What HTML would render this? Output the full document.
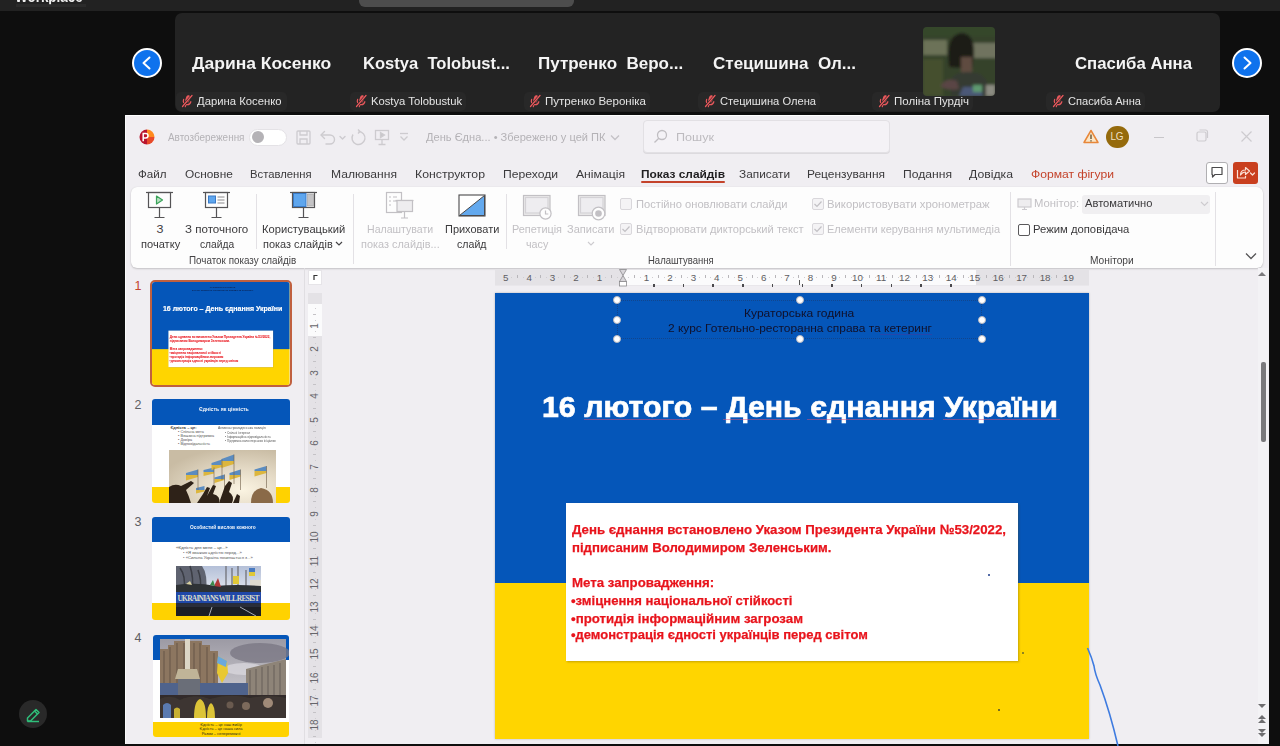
<!DOCTYPE html>
<html><head><meta charset="utf-8">
<style>
*{margin:0;padding:0;box-sizing:border-box}
html,body{width:1280px;height:746px;overflow:hidden;background:#0e0e0e;font-family:"Liberation Sans",sans-serif;position:relative}
.a{position:absolute}
.tx{position:absolute;white-space:nowrap;line-height:1;transform-origin:0 0;display:block}
svg{position:absolute;overflow:visible}
.navbtn{width:30px;height:30px;border-radius:50%;background:#0e72ed;border:2px solid #fff}
.plabel{top:92px;height:19px;background:#282828;border-radius:5px}
.hdl{width:8px;height:8px;border-radius:50%;background:#fff;border:1px solid #b8b8c0}
.sep{width:1px;background:#e3e1e5}
.cb{width:12px;height:12px;border:1px solid #d9d7db;background:#f4f3f5;border-radius:2px}
</style></head><body>
<!-- zoom top bar -->
<div class="a" style="left:0;top:0;width:1280px;height:11px;background:#222"></div>
<div class="a" style="left:359px;top:-8px;width:215px;height:15px;border-radius:6px;background:#4d4d4d"></div>
<!-- workplace text fragment -->
<div class="a" style="left:0;top:0;width:100px;height:11px;overflow:hidden"><div class="tx" style="left:15px;top:-10.6px;font-size:16px;font-weight:bold;color:#f0f0f0;transform:scaleX(0.84)">Workplace</div><div class="a" style="left:16px;top:3.5px;width:70px;height:3px;background:#2e2e2e;opacity:.8"></div></div>
<!-- participants strip -->
<div class="a" style="left:175px;top:13px;width:1045px;height:99px;background:#232323;border-radius:7px"></div>
<div class="a navbtn" style="left:132px;top:48px"></div>
<svg style="left:132px;top:48px" width="30" height="30"><path d="M17.5 9.5 L11.5 15 L17.5 20.5" fill="none" stroke="#fff" stroke-width="2" stroke-linecap="round" stroke-linejoin="round"/></svg>
<div class="a navbtn" style="left:1232px;top:48px"></div>
<svg style="left:1232px;top:48px" width="30" height="30"><path d="M12.5 9.5 L18.5 15 L12.5 20.5" fill="none" stroke="#fff" stroke-width="2" stroke-linecap="round" stroke-linejoin="round"/></svg>
<!-- labels -->
<div class="a plabel" style="left:176px;width:111px"></div>
<div class="a plabel" style="left:350px;width:116px"></div>
<div class="a plabel" style="left:524px;width:126px"></div>
<div class="a plabel" style="left:698px;width:122px"></div>
<div class="a plabel" style="left:872px;width:101px"></div>
<div class="a plabel" style="left:1046px;width:99px"></div>
<!-- mute icons -->
<svg style="left:180px;top:94px" width="14" height="14"><g transform="rotate(18 7 7)"><rect x="5" y="1" width="4.2" height="7.5" rx="2.1" fill="#e8585c"/><path d="M3.3 6.5 q0 4 3.8 4 q3.8 0 3.8 -4 M7.1 10.5 v2.5" fill="none" stroke="#e8585c" stroke-width="1.2" stroke-linecap="round"/></g><path d="M12 1.5 L2.5 12.5" stroke="#232323" stroke-width="2.6"/><path d="M12 1.5 L2.5 12.5" stroke="#e8585c" stroke-width="1.3" stroke-linecap="round"/></svg>
<svg style="left:354px;top:94px" width="14" height="14"><g transform="rotate(18 7 7)"><rect x="5" y="1" width="4.2" height="7.5" rx="2.1" fill="#e8585c"/><path d="M3.3 6.5 q0 4 3.8 4 q3.8 0 3.8 -4 M7.1 10.5 v2.5" fill="none" stroke="#e8585c" stroke-width="1.2" stroke-linecap="round"/></g><path d="M12 1.5 L2.5 12.5" stroke="#232323" stroke-width="2.6"/><path d="M12 1.5 L2.5 12.5" stroke="#e8585c" stroke-width="1.3" stroke-linecap="round"/></svg>
<svg style="left:528px;top:94px" width="14" height="14"><g transform="rotate(18 7 7)"><rect x="5" y="1" width="4.2" height="7.5" rx="2.1" fill="#e8585c"/><path d="M3.3 6.5 q0 4 3.8 4 q3.8 0 3.8 -4 M7.1 10.5 v2.5" fill="none" stroke="#e8585c" stroke-width="1.2" stroke-linecap="round"/></g><path d="M12 1.5 L2.5 12.5" stroke="#232323" stroke-width="2.6"/><path d="M12 1.5 L2.5 12.5" stroke="#e8585c" stroke-width="1.3" stroke-linecap="round"/></svg>
<svg style="left:703px;top:94px" width="14" height="14"><g transform="rotate(18 7 7)"><rect x="5" y="1" width="4.2" height="7.5" rx="2.1" fill="#e8585c"/><path d="M3.3 6.5 q0 4 3.8 4 q3.8 0 3.8 -4 M7.1 10.5 v2.5" fill="none" stroke="#e8585c" stroke-width="1.2" stroke-linecap="round"/></g><path d="M12 1.5 L2.5 12.5" stroke="#232323" stroke-width="2.6"/><path d="M12 1.5 L2.5 12.5" stroke="#e8585c" stroke-width="1.3" stroke-linecap="round"/></svg>
<svg style="left:877px;top:94px" width="14" height="14"><g transform="rotate(18 7 7)"><rect x="5" y="1" width="4.2" height="7.5" rx="2.1" fill="#e8585c"/><path d="M3.3 6.5 q0 4 3.8 4 q3.8 0 3.8 -4 M7.1 10.5 v2.5" fill="none" stroke="#e8585c" stroke-width="1.2" stroke-linecap="round"/></g><path d="M12 1.5 L2.5 12.5" stroke="#232323" stroke-width="2.6"/><path d="M12 1.5 L2.5 12.5" stroke="#e8585c" stroke-width="1.3" stroke-linecap="round"/></svg>
<svg style="left:1051px;top:94px" width="14" height="14"><g transform="rotate(18 7 7)"><rect x="5" y="1" width="4.2" height="7.5" rx="2.1" fill="#e8585c"/><path d="M3.3 6.5 q0 4 3.8 4 q3.8 0 3.8 -4 M7.1 10.5 v2.5" fill="none" stroke="#e8585c" stroke-width="1.2" stroke-linecap="round"/></g><path d="M12 1.5 L2.5 12.5" stroke="#232323" stroke-width="2.6"/><path d="M12 1.5 L2.5 12.5" stroke="#e8585c" stroke-width="1.3" stroke-linecap="round"/></svg>
<!-- video tile Поліна -->
<svg style="left:923px;top:27px" width="72" height="69" viewBox="0 0 72 69">
  <defs><filter id="bl" x="-10%" y="-10%" width="120%" height="120%"><feGaussianBlur stdDeviation="1.8"/></filter><clipPath id="vc"><rect width="72" height="69" rx="4"/></clipPath></defs>
  <g clip-path="url(#vc)"><g filter="url(#bl)">
  <rect x="-3" y="-3" width="78" height="75" fill="#36432a"/>
  <rect x="-3" y="-3" width="78" height="12" fill="#34462a"/>
  <rect x="0" y="13" width="24" height="15" fill="#6c7258"/>
  <rect x="46" y="16" width="28" height="15" fill="#70735e"/>
  <rect x="0" y="32" width="20" height="37" fill="#44502e"/>
  <path d="M26 40 Q22 8 38 6 Q52 6 51 28 L49 42z" fill="#1f1b17"/>
  <path d="M38 30 h11 v15 q-5 4 -11 0z" fill="#5e4c40"/>
  <path d="M28 69 V52 Q34 44 46 45 Q62 46 64 56 V69z" fill="#363a30"/>
  <path d="M18 58 Q24 50 34 54 L36 62 Q26 64 18 60z" fill="#5a4444"/>
  <path d="M36 69 L40 60 L58 60 L60 69z" fill="#4c5878"/>
  <rect x="50" y="58" width="9" height="7" fill="#5e9a70"/>
  <rect x="63" y="58" width="9" height="11" fill="#8c8c82"/>
  </g></g>
</svg>

<!-- PowerPoint window -->
<div class="a" style="left:125px;top:115px;width:1144px;height:629px;background:#f0eef2"></div>
<div class="a" style="left:125px;top:115px;width:1144px;height:1px;background:#fff"></div>
<div class="a" style="left:125px;top:115px;width:1px;height:629px;background:#fafafa"></div>
<!-- title bar: ppt logo -->
<svg style="left:138.5px;top:129px" width="16" height="16"><path d="M8 8 V0.5 A7.5 7.5 0 0 1 15.5 8 Z" fill="#ff8a1e"/><path d="M8 8 H15.5 A7.5 7.5 0 0 1 8 15.5 Z" fill="#e84a2a"/><path d="M8 0.5 A7.5 7.5 0 0 0 8 15.5 Z" fill="#b8142e"/><path d="M4.2 12.3 V4.6 h2.6 a2.2 2.2 0 0 1 0 4.4 h-2.6" fill="none" stroke="#fff" stroke-width="1.5"/></svg>
<!-- toggle -->
<div class="a" style="left:249px;top:128.5px;width:38px;height:17px;border-radius:9px;background:#fff;border:1px solid #e4e2e6"></div>
<div class="a" style="left:251.5px;top:131px;width:12px;height:12px;border-radius:50%;background:#b4b2b6"></div>
<!-- save/undo/redo/present/custom icons -->
<svg style="left:296px;top:130px" width="16" height="15"><g fill="none" stroke="#cdcbcf" stroke-width="1.3"><rect x="1" y="1" width="13" height="13" rx="1"/><path d="M4 1 v4 h7 v-4 M4 14 v-5 h7 v5"/></g></svg>
<svg style="left:319px;top:130px" width="27" height="15"><g fill="none" stroke="#cdcbcf" stroke-width="1.4" stroke-linecap="round" stroke-linejoin="round"><path d="M5.5 1.5 L2 5 L5.5 8.5"/><path d="M2.5 5 H11 a4.5 4.5 0 0 1 0 9 H7"/><path d="M21 6.5 l2.5 2.5 l2.5 -2.5"/></g></svg>
<svg style="left:350px;top:129px" width="17" height="17"><g fill="none" stroke="#cdcbcf" stroke-width="1.4"><path d="M8.5 2.5 a6.5 6.5 0 1 1 -5.5 3"/><path d="M8 0.5 l2 2 l-2 2"/></g></svg>
<svg style="left:374px;top:129px" width="16" height="17"><g fill="none" stroke="#cdcbcf" stroke-width="1.3"><rect x="1.5" y="1.5" width="13" height="9"/><path d="M8 10.5 v5 M4.5 15.5 h7"/><path d="M6.5 3.5 l4 2.5 l-4 2.5 z" fill="#c8c6ca"/></g></svg>
<svg style="left:399px;top:132px" width="10" height="10"><g fill="none" stroke="#cdcbcf" stroke-width="1.3"><path d="M1 1.5 h8"/><path d="M1.5 4.5 l3.5 3.5 l3.5 -3.5"/></g></svg>
<svg style="left:609.5px;top:133.5px" width="11" height="8"><path d="M1 1.5 l4 4 l4 -4" fill="none" stroke="#c4c2c6" stroke-width="1.3"/></svg>
<!-- search box -->
<div class="a" style="left:643px;top:120px;width:247px;height:33px;border-radius:4px;background:#f4f2f6;border:1px solid #e2e0e4;box-shadow:0 1px 0 #dcdade"></div>
<svg style="left:653px;top:129px" width="15" height="15"><g fill="none" stroke="#c0bec2" stroke-width="1.3"><circle cx="9" cy="6" r="4.5"/><path d="M5.8 9.2 L1.5 13.5"/></g></svg>
<!-- warning + avatar + window controls -->
<svg style="left:1083px;top:129px" width="16" height="15"><path d="M8 1.5 L15 13.5 H1 Z" fill="#fbe6c7" stroke="#e8873a" stroke-width="1.5" stroke-linejoin="round"/><path d="M8 5.5 v4.5 M8 11.2 v1.2" stroke="#5b4a2a" stroke-width="1.3"/></svg>
<div class="a" style="left:1106px;top:125.5px;width:22.5px;height:22.5px;border-radius:50%;background:#956a0c"></div>
<div class="tx" style="left:1110.5px;top:132px;font-size:10px;color:#eedfc0;letter-spacing:-0.2px">LG</div>
<div class="a" style="left:1154px;top:137px;width:10px;height:1px;background:#c8c6ca"></div>
<svg style="left:1196px;top:129px" width="13" height="13"><g fill="none" stroke="#cdcbcf" stroke-width="1.2"><rect x="1" y="3" width="9" height="9" rx="1.5"/><path d="M3.5 1 h6 a2 2 0 0 1 2 2 v6"/></g></svg>
<svg style="left:1240px;top:130px" width="13" height="13"><path d="M1.5 1.5 L11.5 11.5 M11.5 1.5 L1.5 11.5" stroke="#cdcbcf" stroke-width="1.2"/></svg>
<!-- active tab underline -->
<div class="a" style="left:641px;top:180.5px;width:84px;height:2px;background:#c4432b;border-radius:1px"></div>
<!-- comment + share -->
<div class="a" style="left:1205.5px;top:161.5px;width:22px;height:22px;border-radius:3px;background:#fff;border:1px solid #b0afb2"></div>
<svg style="left:1210px;top:166px" width="14" height="13"><path d="M2 1.5 h10 v7 h-7 l-2.5 2.5 v-2.5 h-0.5 z" fill="none" stroke="#4a494b" stroke-width="1.2" stroke-linejoin="round"/></svg>
<div class="a" style="left:1233px;top:161.5px;width:25px;height:22.5px;border-radius:3px;background:#c93f1e"></div>
<svg style="left:1235px;top:165px" width="22" height="16"><g fill="none" stroke="#fbe1d6" stroke-width="1.2" stroke-linejoin="round"><path d="M2.5 5 v8 h8 v-2"/><path d="M5.5 10 q0 -5 5 -5 v-2.5 l4 3.5 l-4 3.5 v-2.5 q-3 0 -5 3z"/><path d="M15.5 8 l2 2 l2 -2" stroke-linecap="round"/></g></svg>

<!-- ribbon panel -->
<div class="a" style="left:131px;top:186.5px;width:1132px;height:81px;background:#fdfdfd;border-radius:6px;box-shadow:0 1px 2px rgba(0,0,0,.18),0 0 1px rgba(0,0,0,.12)"></div>
<div class="a sep" style="left:255.5px;top:194px;height:55px"></div>
<div class="a sep" style="left:353px;top:194px;height:70px"></div>
<div class="a sep" style="left:505.5px;top:194px;height:55px"></div>
<div class="a sep" style="left:1009.5px;top:192px;height:74px"></div>
<div class="a sep" style="left:1215px;top:192px;height:74px"></div>
<!-- ribbon icons -->
<svg style="left:145px;top:191px" width="30" height="28"><g fill="none" stroke="#555456" stroke-width="1.2"><path d="M1 1.5 h27"/><rect x="3.5" y="1.5" width="22" height="15"/><path d="M14.5 16.5 v10 M9.5 26.5 h10"/></g><path d="M11.5 5 l6 4 l-6 4 z" fill="#b8e0c0" stroke="#3aa35a" stroke-width="1.2" stroke-linejoin="round"/></svg>
<svg style="left:202px;top:191px" width="30" height="28"><g fill="none" stroke="#555456" stroke-width="1.2"><path d="M1 1.5 h27"/><rect x="3.5" y="1.5" width="22" height="15"/><path d="M14.5 16.5 v10 M9.5 26.5 h10"/></g><rect x="6.5" y="5" width="7" height="7" fill="#5ea6ee" stroke="#3a7bc8" stroke-width="1"/><path d="M15.5 6 h7 M15.5 9 h7 M15.5 12 h7" stroke="#8b8a8c" stroke-width="1"/></svg>
<svg style="left:288.5px;top:191px" width="30" height="28"><g fill="none" stroke="#555456" stroke-width="1.2"><path d="M1 1.5 h27"/><rect x="3.5" y="1.5" width="22" height="15" fill="#fff"/><path d="M14.5 16.5 v10 M9.5 26.5 h10"/></g><rect x="4.5" y="2.5" width="12.5" height="13" fill="#5ea6ee" stroke="#3a7bc8" stroke-width="1"/><rect x="18.5" y="3" width="6" height="12" fill="#c4c3c5" stroke="#9a999b" stroke-width=".6"/></svg>
<svg style="left:385px;top:191px" width="30" height="29"><g fill="none" stroke="#c2c0c4" stroke-width="1.2"><rect x="1.5" y="1.5" width="15" height="20"/><path d="M4 6 h2 M8 6 h4 M4 10 h2 M8 10 h4 M4 14 h2"/><path d="M10.5 9.5 h18"/><rect x="12" y="9.5" width="15.5" height="11" fill="#eeedef"/><path d="M19.5 20.5 v6.5 M16 27 h7"/></g></svg>
<svg style="left:458px;top:194px" width="28" height="23"><rect x="1" y="1" width="26" height="21" fill="#fff" stroke="#4a494b" stroke-width="1.1"/><path d="M26.5 1.5 V21.5 H1.5 Z" fill="#63a9ee" stroke="#4a494b" stroke-width="1" stroke-linejoin="round"/></svg>
<svg style="left:522px;top:193px" width="32" height="30"><g fill="none" stroke="#c2c0c4" stroke-width="1.2"><rect x="1.5" y="2.5" width="26.5" height="20" fill="#ebeaec"/><rect x="3.5" y="4.5" width="22.5" height="15.5" stroke="#d4d2d6" fill="#eeedf0"/><circle cx="23.5" cy="20.5" r="5.6" fill="#fdfdfd"/><path d="M23.5 17.5 v3.5 h2.8"/></g></svg>
<svg style="left:577px;top:193px" width="32" height="30"><g fill="none" stroke="#c2c0c4" stroke-width="1.2"><rect x="1.5" y="2.5" width="26.5" height="20" fill="#ebeaec"/><rect x="3.5" y="4.5" width="22.5" height="15.5" stroke="#d4d2d6" fill="#eeedf0"/><circle cx="21.5" cy="20.5" r="6.3" fill="#fdfdfd"/></g><circle cx="21.5" cy="20.5" r="3.3" fill="#c2c0c4"/></svg>
<svg style="left:587px;top:241px" width="8" height="6"><path d="M1 1 l3 3 l3 -3" fill="none" stroke="#cdcbcf" stroke-width="1.1"/></svg>
<svg style="left:335px;top:241px" width="8" height="6"><path d="M1 1 l3 3 l3 -3" fill="none" stroke="#454446" stroke-width="1.2"/></svg>
<!-- checkboxes -->
<div class="a cb" style="left:619.5px;top:198px"></div>
<div class="a cb" style="left:619.5px;top:223px"></div>
<div class="a cb" style="left:811.5px;top:198px"></div>
<div class="a cb" style="left:811.5px;top:223px"></div>
<svg style="left:619.5px;top:223px" width="12" height="12"><path d="M2.5 6 l2.5 2.5 l4.5 -5" fill="none" stroke="#c2c0c4" stroke-width="1.2"/></svg>
<svg style="left:811.5px;top:198px" width="12" height="12"><path d="M2.5 6 l2.5 2.5 l4.5 -5" fill="none" stroke="#c2c0c4" stroke-width="1.2"/></svg>
<svg style="left:811.5px;top:223px" width="12" height="12"><path d="M2.5 6 l2.5 2.5 l4.5 -5" fill="none" stroke="#c2c0c4" stroke-width="1.2"/></svg>
<!-- monitors group -->
<svg style="left:1017px;top:198px" width="15" height="12"><g fill="none" stroke="#cdcbcf" stroke-width="1.2"><rect x="1" y="1" width="13" height="8" fill="#eeedef"/><path d="M7.5 9 v2 M5 11.5 h5"/></g></svg>
<div class="a" style="left:1082px;top:194.5px;width:128px;height:19px;border-radius:3px;background:#f0eff1"></div>
<svg style="left:1200px;top:201px" width="9" height="6"><path d="M1 1 l3.5 3.5 l3.5 -3.5" fill="none" stroke="#cdcbcf" stroke-width="1.1"/></svg>
<div class="a" style="left:1017.5px;top:223.5px;width:12px;height:12px;border:1px solid #5a595b;background:#fff;border-radius:2px"></div>
<svg style="left:1245px;top:252px" width="12" height="8"><path d="M1 1.5 l5 5 l5 -5" fill="none" stroke="#555456" stroke-width="1.3"/></svg>

<!-- thumbnail panel -->
<div class="a" style="left:304px;top:268px;width:1px;height:476px;background:#e0dee2"></div>
<!-- thumb 1 -->
<div class="a" style="left:150px;top:279.5px;width:141.5px;height:107px;border:2px solid #c0603f;border-radius:5px"></div>
<div class="a" style="left:152px;top:281.5px;width:137.5px;height:103px;border-radius:3px;overflow:hidden">
 <div class="a" style="left:0;top:0;width:594px;height:446px;transform:scale(0.2315);transform-origin:0 0">
<div class="a" style="left:0;top:0;width:594px;height:446px;background:#ffd500"></div><div class="a" style="left:0;top:0;width:594px;height:289.5px;background:#0556b9"></div><div class="a" style="left:71px;top:210px;width:452px;height:158px;background:#fff;box-shadow:1px 1px 2px rgba(90,70,0,.35)"></div><span class="tx" style="left:249.0px;top:14.65px;font-size:11px;color:#10102a;transform:scaleX(1.0943);">Кураторська година</span>
<span class="tx" style="left:172.9px;top:30.35px;font-size:11px;color:#10102a;transform:scaleX(1.0860);">2 курс Готельно-ресторанна справа та кетеринг</span>
<span class="tx" style="left:47.2px;top:98.80px;font-size:30px;color:#ffffff;font-weight:bold;transform:scaleX(1.0106);-webkit-text-stroke:0.7px #fff;">16 лютого – День єднання України</span>
<span class="tx" style="left:76.6px;top:230.34px;font-size:13.6px;color:#e8141c;font-weight:bold;transform:scaleX(0.9744);-webkit-text-stroke:0.25px #e8141c;">День єднання встановлено Указом Президента України №53/2022,</span>
<span class="tx" style="left:76.6px;top:247.54px;font-size:13.6px;color:#e8141c;font-weight:bold;transform:scaleX(0.9675);-webkit-text-stroke:0.25px #e8141c;">підписаним Володимиром Зеленським.</span>
<span class="tx" style="left:76.6px;top:283.24px;font-size:13.6px;color:#e8141c;font-weight:bold;transform:scaleX(0.9745);-webkit-text-stroke:0.25px #e8141c;">Мета запровадження:</span>
<span class="tx" style="left:75.5px;top:300.64px;font-size:13.6px;color:#e8141c;font-weight:bold;transform:scaleX(0.9653);-webkit-text-stroke:0.25px #e8141c;">•зміцнення національної стійкості</span>
<span class="tx" style="left:75.5px;top:318.54px;font-size:13.6px;color:#e8141c;font-weight:bold;transform:scaleX(0.9779);-webkit-text-stroke:0.25px #e8141c;">•протидія інформаційним загрозам</span>
<span class="tx" style="left:75.5px;top:335.44px;font-size:13.6px;color:#e8141c;font-weight:bold;transform:scaleX(0.9566);-webkit-text-stroke:0.25px #e8141c;">•демонстрація єдності українців перед світом</span>
 </div>
</div>
<!-- thumb 2 -->
<div class="a" style="left:152px;top:399px;width:137.5px;height:103.5px;background:#fff;border-radius:3px;overflow:hidden">
  <div class="a" style="left:0;top:0;width:137.5px;height:25.8px;background:#0556b9"></div>
  <div class="a" style="left:0;top:87.7px;width:137.5px;height:16px;background:#ffd200"></div>
  <svg style="left:17.2px;top:50.8px" width="107" height="53" viewBox="0 0 107 53">
    <defs><radialGradient id="sky2" cx="0.68" cy="0.75" r="0.8"><stop offset="0" stop-color="#fbf4e2"/><stop offset=".45" stop-color="#e6dcc8"/><stop offset="1" stop-color="#c9bca4"/></radialGradient>
    <linearGradient id="fl" x1="0" y1="0" x2="0" y2="1"><stop offset=".5" stop-color="#5b8cc0"/><stop offset=".5" stop-color="#dcb63e"/></linearGradient></defs>
    <rect width="107" height="53" fill="url(#sky2)"/>
    <g fill="url(#fl)">
      <path d="M17 23 L29 19.5 L29 27 L17 30.5z"/><path d="M34.5 20 L45 17.5 L45 23.5 L34.5 26z"/>
      <path d="M42.5 13 L53 9.5 L53 17 L42.5 20z"/><path d="M52.5 9 L65 4.5 L65 14 L52.5 18z"/>
      <path d="M45.5 27.5 L55.5 24.5 L55.5 30 L45.5 33z"/><path d="M60.5 23 L71.5 19.5 L71.5 26.5 L60.5 30z"/>
      <path d="M85.5 19.5 L97.5 16 L97.5 23 L85.5 26.5z"/><path d="M27 38 L35.5 36 L35.5 41.5 L27 43.5z"/>
    </g>
    <g stroke="#6e5e48" stroke-width=".6"><path d="M29 19.5 V40 M45 17.5 V36 M53 9.5 V30 M65 4.5 V34 M55.5 24.5 V42 M71.5 19.5 V40 M97.5 16 V38"/></g>
    <g fill="#2e2218">
      <path d="M0 53 V37 Q6 33 12 36 L22 31 L25 33 L17 40 Q20 46 22 53z"/>
      <path d="M28 53 L34 44 L38 37 L41 38 L38 46 L44 35 L47 36 L44 44 Q52 46 50 53z"/>
      <path d="M50 53 L56 36 L60 31 L63 33 L60 42 Q66 46 63 53z"/>
      <path d="M64 53 L68 44 L71 46 L70 53z"/>
    </g>
    <path d="M82 53 Q82 40 92 38 Q104 40 104 53z" fill="#8a6a48"/>
  </svg>
  <div class="tx" style="left:47px;top:7.6px;font-size:5.6px;font-weight:bold;color:#f0f4fa;transform:scaleX(0.93)">Єдність як цінність</div>
  <div class="tx" style="left:18.5px;top:26.5px;font-size:4px;font-weight:bold;color:#333">Єдність – це:</div>
  <div class="tx" style="left:26px;top:31px;font-size:3.8px;color:#555;line-height:4px">• Спільна мета<br>• Взаємна підтримка<br>• Довіра<br>• Відповідальність</div>
  <div class="tx" style="left:66px;top:28px;font-size:3.8px;color:#555;transform:scaleX(.88)">Активна громадянська позиція</div>
  <div class="tx" style="left:73px;top:32px;font-size:3.8px;color:#555;line-height:4px;transform:scaleX(.8)">• Спільні інтереси<br>• Інформаційна відповідальність<br>• Підтримка волонтерських ініціатив</div>
</div>
<!-- thumb 3 -->
<div class="a" style="left:152px;top:516.7px;width:137.5px;height:103px;background:#fff;border-radius:3px;overflow:hidden">
  <div class="a" style="left:0;top:0;width:137.5px;height:25.5px;background:#0556b9"></div>
  <div class="a" style="left:0;top:86.5px;width:137.5px;height:17px;background:#ffd200"></div>
  <div class="tx" style="left:37.5px;top:8.2px;font-size:5.6px;font-weight:bold;color:#f0f4fa;transform:scaleX(0.86)">Особистий вислов кожного</div>
  <div class="tx" style="left:24px;top:29px;font-size:4.2px;color:#444">«Єдність для мене – це...»</div>
  <div class="tx" style="left:31px;top:34.3px;font-size:4.2px;color:#555">• «Я вважаю єдністю перед...»</div>
  <div class="tx" style="left:31px;top:39.3px;font-size:4.2px;color:#555">• «Сильна Україна починається з...»</div>
  <svg style="left:24.3px;top:49.2px" width="85" height="50" viewBox="0 0 85 50">
    <defs><linearGradient id="sky3" x1="0" y1="0" x2="0" y2="1"><stop offset="0" stop-color="#b4c0d8"/><stop offset="1" stop-color="#e4e8f0"/></linearGradient><filter id="b3"><feGaussianBlur stdDeviation=".5"/></filter></defs>
    <rect width="85" height="50" fill="#22242a"/>
    <rect width="85" height="27" fill="url(#sky3)"/>
    <g filter="url(#b3)">
    <path d="M0 0 H26 Q32 8 30 26 H0z" fill="#5e6470"/>
    <path d="M4 2 Q10 10 8 24 M14 0 Q18 12 16 26 M22 4 Q26 14 24 26" stroke="#3a3c44" stroke-width="1.5" fill="none"/>
    <path d="M50 0 V26 M56 2 V26 M62 0 V26 M70 4 V26" stroke="#6a6a70" stroke-width="1.2"/>
    <path d="M57 10 h6 v8 h-6z" fill="#e0c838"/><path d="M73 2 h6 v4 h-6z" fill="#4a7ac0"/><path d="M73 6 h6 v4 h-6z" fill="#e0c838"/>
    <path d="M74 14 h11 v12 h-11z" fill="#e0dcd0"/>
    <path d="M0 19 Q20 16 40 20 Q60 18 85 20 V27 H0z" fill="#2e3036"/>
    <path d="M38 20 l4 -8 l3 9z" fill="#b03838"/><path d="M34 19 l3 -5 l2 6z" fill="#3a8a4a"/><path d="M10 18 l4 -3 l2 4z" fill="#d8d0a0"/>
    </g>
    <rect y="26" width="85" height="11.5" fill="#2048a8"/>
    <text x="42.5" y="34.5" text-anchor="middle" font-family="Liberation Serif" font-weight="bold" font-size="7.5" fill="#dcdcc8" textLength="82">UKRAINIANS WILL RESIST</text>
    <path d="M0 37.5 H85 V50 H0z" fill="#1c1e24"/>
    <path d="M0 37.5 H85 V41 H0z" fill="#2a2e3a"/>
    <path d="M33 50 L36 41 M64 41 L80 50" stroke="#a8acb4" stroke-width="1"/>
  </svg>
</div>
<!-- thumb 4 -->
<div class="a" style="left:152.7px;top:634.5px;width:136.7px;height:102.5px;background:#fff;border-radius:3px;overflow:hidden">
  <div class="a" style="left:0;top:0;width:136.7px;height:25px;background:#0556b9"></div>
  <div class="a" style="left:0;top:87px;width:136.7px;height:16px;background:#ffd200"></div>
  <svg style="left:7px;top:4.6px" width="126" height="79" viewBox="0 0 126 79">
    <defs><linearGradient id="sky4" x1="0" y1="0" x2="0" y2="1"><stop offset="0" stop-color="#9c9aa4"/><stop offset=".6" stop-color="#c4c2c8"/><stop offset="1" stop-color="#b0aeb6"/></linearGradient><filter id="b4"><feGaussianBlur stdDeviation=".6"/></filter></defs>
    <rect width="126" height="79" fill="url(#sky4)"/>
    <g filter="url(#b4)">
    <ellipse cx="100" cy="14" rx="30" ry="10" fill="#7a7884" opacity=".8"/>
    <ellipse cx="84" cy="30" rx="20" ry="6" fill="#d8d6dc" opacity=".8"/>
    <path d="M0 10 H8 V6 H14 V2 H42 V6 H50 V12 H58 V46 H0z" fill="#8c7660"/>
    <path d="M4 12 V44 M10 8 V44 M17 4 V44 M24 4 V44 M34 4 V44 M40 4 V44 M47 8 V44 M54 14 V44" stroke="#6a5848" stroke-width="1.1"/>
    <rect x="25" y="0" width="5" height="34" fill="#dcd6c6"/>
    <path d="M18 30 h19 l3 10 h-25z" fill="#c0b498"/>
    <path d="M86 30 L126 20 V60 H86z" fill="#8e8478"/>
    <path d="M90 31 V58 M96 30 V58 M102 28 V58 M108 27 V58 M114 26 V58 M120 24 V58" stroke="#665e56" stroke-width="1"/>
    <rect x="0" y="44" width="88" height="14" fill="#50648c"/>
    <path d="M18 40 h22 v16 h-22z" fill="#6a6e78"/>
    <path d="M58 17 L67 22 L68 34 L62 44 L57 34z" fill="#e8c830"/>
    <path d="M58 17 L67 22 L66 28 L57 24z" fill="#6aa8dc"/>
    <rect x="0" y="56" width="126" height="23" fill="#302c2a"/>
    <path d="M0 60 Q10 55 20 61 Q35 54 50 60 Q70 54 90 59 Q110 55 126 59 V79 H0z" fill="#3e3630"/>
    <path d="M34 79 Q34 62 40 60 Q46 62 46 79z M47 79 Q47 66 51 64 Q55 66 55 79z" fill="#dcc438"/>
    <path d="M3 79 V66 Q7 62 11 66 V79z" fill="#5a7ab0"/><path d="M14 79 V70 Q17 67 20 70 V79z" fill="#c8b030"/>
    <circle cx="108" cy="64" r="5" fill="#a08a78"/><circle cx="86" cy="67" r="4" fill="#7c6a5c"/><circle cx="70" cy="66" r="3.5" fill="#6a5a50"/>
    </g>
  </svg>
  <div class="tx" style="left:0;top:88.5px;width:136.7px;text-align:center;font-size:3.9px;color:#2a2a1a;line-height:4.3px">Єдність – це наш вибір<br>Єдність – це наша сила<br>Разом – непереможні</div>
</div>

<!-- vertical ruler -->
<div class="a" style="left:308px;top:270px;width:14px;height:14.5px;background:#fff;border:1px solid #e6e4e8"></div>
<svg style="left:308px;top:270px" width="14" height="15"><path d="M6 10 v-4.5 h3.5" fill="none" stroke="#333" stroke-width="1.2"/></svg>
<div class="a" style="left:308px;top:293px;width:14px;height:445px;background:#e4e2e6"></div>
<div class="a" style="left:308px;top:304px;width:14px;height:32px;background:#fbfbfc"></div>
<!-- horizontal ruler -->
<div class="a" style="left:495px;top:270px;width:594px;height:14.5px;background:#e4e2e6"></div><div class="a" style="left:495px;top:284.5px;width:594px;height:1.5px;background:#e9e7eb"></div>
<div class="a" style="left:623px;top:270px;width:353px;height:14.5px;background:#fbfbfc"></div>
<div class="tx" style="left:490.8px;top:272.7px;width:30px;text-align:center;font-size:9.8px;color:#5e5d62">5</div>
<div class="a" style="left:511.1px;top:276.5px;width:1px;height:1px;background:#cfcdd1"></div>
<div class="a" style="left:517.0px;top:275px;width:1px;height:3px;background:#b8b6ba"></div>
<div class="a" style="left:522.8px;top:276.5px;width:1px;height:1px;background:#cfcdd1"></div>
<div class="tx" style="left:514.2px;top:272.7px;width:30px;text-align:center;font-size:9.8px;color:#5e5d62">4</div>
<div class="a" style="left:534.6px;top:276.5px;width:1px;height:1px;background:#cfcdd1"></div>
<div class="a" style="left:540.4px;top:275px;width:1px;height:3px;background:#b8b6ba"></div>
<div class="a" style="left:546.3px;top:276.5px;width:1px;height:1px;background:#cfcdd1"></div>
<div class="tx" style="left:537.6px;top:272.7px;width:30px;text-align:center;font-size:9.8px;color:#5e5d62">3</div>
<div class="a" style="left:558.0px;top:276.5px;width:1px;height:1px;background:#cfcdd1"></div>
<div class="a" style="left:563.9px;top:275px;width:1px;height:3px;background:#b8b6ba"></div>
<div class="a" style="left:569.7px;top:276.5px;width:1px;height:1px;background:#cfcdd1"></div>
<div class="tx" style="left:561.1px;top:272.7px;width:30px;text-align:center;font-size:9.8px;color:#5e5d62">2</div>
<div class="a" style="left:581.5px;top:276.5px;width:1px;height:1px;background:#cfcdd1"></div>
<div class="a" style="left:587.3px;top:275px;width:1px;height:3px;background:#b8b6ba"></div>
<div class="a" style="left:593.2px;top:276.5px;width:1px;height:1px;background:#cfcdd1"></div>
<div class="tx" style="left:584.5px;top:272.7px;width:30px;text-align:center;font-size:9.8px;color:#5e5d62">1</div>
<div class="a" style="left:604.9px;top:276.5px;width:1px;height:1px;background:#cfcdd1"></div>
<div class="a" style="left:610.8px;top:275px;width:1px;height:3px;background:#b8b6ba"></div>
<div class="a" style="left:616.6px;top:276.5px;width:1px;height:1px;background:#cfcdd1"></div>
<div class="a" style="left:628.4px;top:276.5px;width:1px;height:1px;background:#cfcdd1"></div>
<div class="a" style="left:634.2px;top:275px;width:1px;height:3px;background:#b8b6ba"></div>
<div class="a" style="left:640.1px;top:276.5px;width:1px;height:1px;background:#cfcdd1"></div>
<div class="tx" style="left:631.5px;top:272.7px;width:30px;text-align:center;font-size:9.8px;color:#5e5d62">1</div>
<div class="a" style="left:651.8px;top:276.5px;width:1px;height:1px;background:#cfcdd1"></div>
<div class="a" style="left:657.7px;top:275px;width:1px;height:3px;background:#b8b6ba"></div>
<div class="a" style="left:663.5px;top:276.5px;width:1px;height:1px;background:#cfcdd1"></div>
<div class="tx" style="left:654.9px;top:272.7px;width:30px;text-align:center;font-size:9.8px;color:#5e5d62">2</div>
<div class="a" style="left:675.3px;top:276.5px;width:1px;height:1px;background:#cfcdd1"></div>
<div class="a" style="left:681.1px;top:275px;width:1px;height:3px;background:#b8b6ba"></div>
<div class="a" style="left:687.0px;top:276.5px;width:1px;height:1px;background:#cfcdd1"></div>
<div class="tx" style="left:678.4px;top:272.7px;width:30px;text-align:center;font-size:9.8px;color:#5e5d62">3</div>
<div class="a" style="left:698.7px;top:276.5px;width:1px;height:1px;background:#cfcdd1"></div>
<div class="a" style="left:704.6px;top:275px;width:1px;height:3px;background:#b8b6ba"></div>
<div class="a" style="left:710.4px;top:276.5px;width:1px;height:1px;background:#cfcdd1"></div>
<div class="tx" style="left:701.8px;top:272.7px;width:30px;text-align:center;font-size:9.8px;color:#5e5d62">4</div>
<div class="a" style="left:722.2px;top:276.5px;width:1px;height:1px;background:#cfcdd1"></div>
<div class="a" style="left:728.0px;top:275px;width:1px;height:3px;background:#b8b6ba"></div>
<div class="a" style="left:733.9px;top:276.5px;width:1px;height:1px;background:#cfcdd1"></div>
<div class="tx" style="left:725.2px;top:272.7px;width:30px;text-align:center;font-size:9.8px;color:#5e5d62">5</div>
<div class="a" style="left:745.6px;top:276.5px;width:1px;height:1px;background:#cfcdd1"></div>
<div class="a" style="left:751.5px;top:275px;width:1px;height:3px;background:#b8b6ba"></div>
<div class="a" style="left:757.3px;top:276.5px;width:1px;height:1px;background:#cfcdd1"></div>
<div class="tx" style="left:748.7px;top:272.7px;width:30px;text-align:center;font-size:9.8px;color:#5e5d62">6</div>
<div class="a" style="left:769.1px;top:276.5px;width:1px;height:1px;background:#cfcdd1"></div>
<div class="a" style="left:774.9px;top:275px;width:1px;height:3px;background:#b8b6ba"></div>
<div class="a" style="left:780.8px;top:276.5px;width:1px;height:1px;background:#cfcdd1"></div>
<div class="tx" style="left:772.1px;top:272.7px;width:30px;text-align:center;font-size:9.8px;color:#5e5d62">7</div>
<div class="a" style="left:792.5px;top:276.5px;width:1px;height:1px;background:#cfcdd1"></div>
<div class="a" style="left:798.4px;top:275px;width:1px;height:3px;background:#b8b6ba"></div>
<div class="a" style="left:804.2px;top:276.5px;width:1px;height:1px;background:#cfcdd1"></div>
<div class="tx" style="left:795.6px;top:272.7px;width:30px;text-align:center;font-size:9.8px;color:#5e5d62">8</div>
<div class="a" style="left:816.0px;top:276.5px;width:1px;height:1px;background:#cfcdd1"></div>
<div class="a" style="left:821.8px;top:275px;width:1px;height:3px;background:#b8b6ba"></div>
<div class="a" style="left:827.7px;top:276.5px;width:1px;height:1px;background:#cfcdd1"></div>
<div class="tx" style="left:819.0px;top:272.7px;width:30px;text-align:center;font-size:9.8px;color:#5e5d62">9</div>
<div class="a" style="left:839.4px;top:276.5px;width:1px;height:1px;background:#cfcdd1"></div>
<div class="a" style="left:845.3px;top:275px;width:1px;height:3px;background:#b8b6ba"></div>
<div class="a" style="left:851.1px;top:276.5px;width:1px;height:1px;background:#cfcdd1"></div>
<div class="tx" style="left:842.5px;top:272.7px;width:30px;text-align:center;font-size:9.8px;color:#5e5d62">10</div>
<div class="a" style="left:862.9px;top:276.5px;width:1px;height:1px;background:#cfcdd1"></div>
<div class="a" style="left:868.7px;top:275px;width:1px;height:3px;background:#b8b6ba"></div>
<div class="a" style="left:874.6px;top:276.5px;width:1px;height:1px;background:#cfcdd1"></div>
<div class="tx" style="left:866.0px;top:272.7px;width:30px;text-align:center;font-size:9.8px;color:#5e5d62">11</div>
<div class="a" style="left:886.3px;top:276.5px;width:1px;height:1px;background:#cfcdd1"></div>
<div class="a" style="left:892.2px;top:275px;width:1px;height:3px;background:#b8b6ba"></div>
<div class="a" style="left:898.0px;top:276.5px;width:1px;height:1px;background:#cfcdd1"></div>
<div class="tx" style="left:889.4px;top:272.7px;width:30px;text-align:center;font-size:9.8px;color:#5e5d62">12</div>
<div class="a" style="left:909.8px;top:276.5px;width:1px;height:1px;background:#cfcdd1"></div>
<div class="a" style="left:915.6px;top:275px;width:1px;height:3px;background:#b8b6ba"></div>
<div class="a" style="left:921.5px;top:276.5px;width:1px;height:1px;background:#cfcdd1"></div>
<div class="tx" style="left:912.8px;top:272.7px;width:30px;text-align:center;font-size:9.8px;color:#5e5d62">13</div>
<div class="a" style="left:933.2px;top:276.5px;width:1px;height:1px;background:#cfcdd1"></div>
<div class="a" style="left:939.1px;top:275px;width:1px;height:3px;background:#b8b6ba"></div>
<div class="a" style="left:944.9px;top:276.5px;width:1px;height:1px;background:#cfcdd1"></div>
<div class="tx" style="left:936.3px;top:272.7px;width:30px;text-align:center;font-size:9.8px;color:#5e5d62">14</div>
<div class="a" style="left:956.7px;top:276.5px;width:1px;height:1px;background:#cfcdd1"></div>
<div class="a" style="left:962.5px;top:275px;width:1px;height:3px;background:#b8b6ba"></div>
<div class="a" style="left:968.4px;top:276.5px;width:1px;height:1px;background:#cfcdd1"></div>
<div class="tx" style="left:959.8px;top:272.7px;width:30px;text-align:center;font-size:9.8px;color:#5e5d62">15</div>
<div class="a" style="left:980.1px;top:276.5px;width:1px;height:1px;background:#cfcdd1"></div>
<div class="a" style="left:986.0px;top:275px;width:1px;height:3px;background:#b8b6ba"></div>
<div class="a" style="left:991.8px;top:276.5px;width:1px;height:1px;background:#cfcdd1"></div>
<div class="tx" style="left:983.2px;top:272.7px;width:30px;text-align:center;font-size:9.8px;color:#5e5d62">16</div>
<div class="a" style="left:1003.6px;top:276.5px;width:1px;height:1px;background:#cfcdd1"></div>
<div class="a" style="left:1009.4px;top:275px;width:1px;height:3px;background:#b8b6ba"></div>
<div class="a" style="left:1015.3px;top:276.5px;width:1px;height:1px;background:#cfcdd1"></div>
<div class="tx" style="left:1006.6px;top:272.7px;width:30px;text-align:center;font-size:9.8px;color:#5e5d62">17</div>
<div class="a" style="left:1027.0px;top:276.5px;width:1px;height:1px;background:#cfcdd1"></div>
<div class="a" style="left:1032.9px;top:275px;width:1px;height:3px;background:#b8b6ba"></div>
<div class="a" style="left:1038.7px;top:276.5px;width:1px;height:1px;background:#cfcdd1"></div>
<div class="tx" style="left:1030.1px;top:272.7px;width:30px;text-align:center;font-size:9.8px;color:#5e5d62">18</div>
<div class="a" style="left:1050.5px;top:276.5px;width:1px;height:1px;background:#cfcdd1"></div>
<div class="a" style="left:1056.3px;top:275px;width:1px;height:3px;background:#b8b6ba"></div>
<div class="a" style="left:1062.2px;top:276.5px;width:1px;height:1px;background:#cfcdd1"></div>
<div class="tx" style="left:1053.5px;top:272.7px;width:30px;text-align:center;font-size:9.8px;color:#5e5d62">19</div>
<div class="tx" style="left:300.0px;top:320.9px;width:30px;text-align:center;font-size:10px;color:#66656a;transform:rotate(-90deg);transform-origin:15px 5px">1</div>
<div class="tx" style="left:300.0px;top:344.4px;width:30px;text-align:center;font-size:10px;color:#66656a;transform:rotate(-90deg);transform-origin:15px 5px">2</div>
<div class="tx" style="left:300.0px;top:367.9px;width:30px;text-align:center;font-size:10px;color:#66656a;transform:rotate(-90deg);transform-origin:15px 5px">3</div>
<div class="tx" style="left:300.0px;top:391.3px;width:30px;text-align:center;font-size:10px;color:#66656a;transform:rotate(-90deg);transform-origin:15px 5px">4</div>
<div class="tx" style="left:300.0px;top:414.8px;width:30px;text-align:center;font-size:10px;color:#66656a;transform:rotate(-90deg);transform-origin:15px 5px">5</div>
<div class="tx" style="left:300.0px;top:438.2px;width:30px;text-align:center;font-size:10px;color:#66656a;transform:rotate(-90deg);transform-origin:15px 5px">6</div>
<div class="tx" style="left:300.0px;top:461.6px;width:30px;text-align:center;font-size:10px;color:#66656a;transform:rotate(-90deg);transform-origin:15px 5px">7</div>
<div class="tx" style="left:300.0px;top:485.1px;width:30px;text-align:center;font-size:10px;color:#66656a;transform:rotate(-90deg);transform-origin:15px 5px">8</div>
<div class="tx" style="left:300.0px;top:508.5px;width:30px;text-align:center;font-size:10px;color:#66656a;transform:rotate(-90deg);transform-origin:15px 5px">9</div>
<div class="tx" style="left:300.0px;top:532.0px;width:30px;text-align:center;font-size:10px;color:#66656a;transform:rotate(-90deg);transform-origin:15px 5px">10</div>
<div class="tx" style="left:300.0px;top:555.5px;width:30px;text-align:center;font-size:10px;color:#66656a;transform:rotate(-90deg);transform-origin:15px 5px">11</div>
<div class="tx" style="left:300.0px;top:578.9px;width:30px;text-align:center;font-size:10px;color:#66656a;transform:rotate(-90deg);transform-origin:15px 5px">12</div>
<div class="tx" style="left:300.0px;top:602.3px;width:30px;text-align:center;font-size:10px;color:#66656a;transform:rotate(-90deg);transform-origin:15px 5px">13</div>
<div class="tx" style="left:300.0px;top:625.8px;width:30px;text-align:center;font-size:10px;color:#66656a;transform:rotate(-90deg);transform-origin:15px 5px">14</div>
<div class="tx" style="left:300.0px;top:649.2px;width:30px;text-align:center;font-size:10px;color:#66656a;transform:rotate(-90deg);transform-origin:15px 5px">15</div>
<div class="tx" style="left:300.0px;top:672.7px;width:30px;text-align:center;font-size:10px;color:#66656a;transform:rotate(-90deg);transform-origin:15px 5px">16</div>
<div class="tx" style="left:300.0px;top:696.1px;width:30px;text-align:center;font-size:10px;color:#66656a;transform:rotate(-90deg);transform-origin:15px 5px">17</div>
<div class="tx" style="left:300.0px;top:719.6px;width:30px;text-align:center;font-size:10px;color:#66656a;transform:rotate(-90deg);transform-origin:15px 5px">18</div>
<div class="a" style="left:314.5px;top:307.9px;width:1px;height:1px;background:#cfcdd1"></div>
<div class="a" style="left:313px;top:313.7px;width:3px;height:1px;background:#c4c2c6"></div>
<div class="a" style="left:314.5px;top:319.6px;width:1px;height:1px;background:#cfcdd1"></div>
<div class="a" style="left:314.5px;top:331.3px;width:1px;height:1px;background:#cfcdd1"></div>
<div class="a" style="left:313px;top:337.2px;width:3px;height:1px;background:#c4c2c6"></div>
<div class="a" style="left:314.5px;top:343.0px;width:1px;height:1px;background:#cfcdd1"></div>
<div class="a" style="left:314.5px;top:354.8px;width:1px;height:1px;background:#cfcdd1"></div>
<div class="a" style="left:313px;top:360.6px;width:3px;height:1px;background:#c4c2c6"></div>
<div class="a" style="left:314.5px;top:366.5px;width:1px;height:1px;background:#cfcdd1"></div>
<div class="a" style="left:314.5px;top:378.2px;width:1px;height:1px;background:#cfcdd1"></div>
<div class="a" style="left:313px;top:384.1px;width:3px;height:1px;background:#c4c2c6"></div>
<div class="a" style="left:314.5px;top:389.9px;width:1px;height:1px;background:#cfcdd1"></div>
<div class="a" style="left:314.5px;top:401.7px;width:1px;height:1px;background:#cfcdd1"></div>
<div class="a" style="left:313px;top:407.5px;width:3px;height:1px;background:#c4c2c6"></div>
<div class="a" style="left:314.5px;top:413.4px;width:1px;height:1px;background:#cfcdd1"></div>
<div class="a" style="left:314.5px;top:425.1px;width:1px;height:1px;background:#cfcdd1"></div>
<div class="a" style="left:313px;top:431.0px;width:3px;height:1px;background:#c4c2c6"></div>
<div class="a" style="left:314.5px;top:436.8px;width:1px;height:1px;background:#cfcdd1"></div>
<div class="a" style="left:314.5px;top:448.6px;width:1px;height:1px;background:#cfcdd1"></div>
<div class="a" style="left:313px;top:454.4px;width:3px;height:1px;background:#c4c2c6"></div>
<div class="a" style="left:314.5px;top:460.3px;width:1px;height:1px;background:#cfcdd1"></div>
<div class="a" style="left:314.5px;top:472.0px;width:1px;height:1px;background:#cfcdd1"></div>
<div class="a" style="left:313px;top:477.9px;width:3px;height:1px;background:#c4c2c6"></div>
<div class="a" style="left:314.5px;top:483.7px;width:1px;height:1px;background:#cfcdd1"></div>
<div class="a" style="left:314.5px;top:495.5px;width:1px;height:1px;background:#cfcdd1"></div>
<div class="a" style="left:313px;top:501.3px;width:3px;height:1px;background:#c4c2c6"></div>
<div class="a" style="left:314.5px;top:507.2px;width:1px;height:1px;background:#cfcdd1"></div>
<div class="a" style="left:314.5px;top:518.9px;width:1px;height:1px;background:#cfcdd1"></div>
<div class="a" style="left:313px;top:524.8px;width:3px;height:1px;background:#c4c2c6"></div>
<div class="a" style="left:314.5px;top:530.6px;width:1px;height:1px;background:#cfcdd1"></div>
<div class="a" style="left:314.5px;top:542.4px;width:1px;height:1px;background:#cfcdd1"></div>
<div class="a" style="left:313px;top:548.2px;width:3px;height:1px;background:#c4c2c6"></div>
<div class="a" style="left:314.5px;top:554.1px;width:1px;height:1px;background:#cfcdd1"></div>
<div class="a" style="left:314.5px;top:565.8px;width:1px;height:1px;background:#cfcdd1"></div>
<div class="a" style="left:313px;top:571.7px;width:3px;height:1px;background:#c4c2c6"></div>
<div class="a" style="left:314.5px;top:577.5px;width:1px;height:1px;background:#cfcdd1"></div>
<div class="a" style="left:314.5px;top:589.3px;width:1px;height:1px;background:#cfcdd1"></div>
<div class="a" style="left:313px;top:595.1px;width:3px;height:1px;background:#c4c2c6"></div>
<div class="a" style="left:314.5px;top:601.0px;width:1px;height:1px;background:#cfcdd1"></div>
<div class="a" style="left:314.5px;top:612.7px;width:1px;height:1px;background:#cfcdd1"></div>
<div class="a" style="left:313px;top:618.6px;width:3px;height:1px;background:#c4c2c6"></div>
<div class="a" style="left:314.5px;top:624.4px;width:1px;height:1px;background:#cfcdd1"></div>
<div class="a" style="left:314.5px;top:636.2px;width:1px;height:1px;background:#cfcdd1"></div>
<div class="a" style="left:313px;top:642.0px;width:3px;height:1px;background:#c4c2c6"></div>
<div class="a" style="left:314.5px;top:647.9px;width:1px;height:1px;background:#cfcdd1"></div>
<div class="a" style="left:314.5px;top:659.6px;width:1px;height:1px;background:#cfcdd1"></div>
<div class="a" style="left:313px;top:665.5px;width:3px;height:1px;background:#c4c2c6"></div>
<div class="a" style="left:314.5px;top:671.3px;width:1px;height:1px;background:#cfcdd1"></div>
<div class="a" style="left:314.5px;top:683.1px;width:1px;height:1px;background:#cfcdd1"></div>
<div class="a" style="left:313px;top:688.9px;width:3px;height:1px;background:#c4c2c6"></div>
<div class="a" style="left:314.5px;top:694.8px;width:1px;height:1px;background:#cfcdd1"></div>
<div class="a" style="left:314.5px;top:706.5px;width:1px;height:1px;background:#cfcdd1"></div>
<div class="a" style="left:313px;top:712.4px;width:3px;height:1px;background:#c4c2c6"></div>
<div class="a" style="left:314.5px;top:718.2px;width:1px;height:1px;background:#cfcdd1"></div>
<div class="a" style="left:314.5px;top:730.0px;width:1px;height:1px;background:#cfcdd1"></div>
<div class="a" style="left:313px;top:735.8px;width:3px;height:1px;background:#c4c2c6"></div>
<div class="a" style="left:314.5px;top:741.7px;width:1px;height:1px;background:#cfcdd1"></div>
<svg style="left:619px;top:269px" width="9" height="19"><path d="M0.5 0.5 h7 l-3.5 6 z" fill="#d8d6da" stroke="#8a898c" stroke-width="0.8"/><path d="M0.5 12.5 l3.5 -6 l3.5 6 z" fill="#d8d6da" stroke="#8a898c" stroke-width="0.8"/><rect x="0.5" y="12.5" width="7" height="4.5" fill="#fff" stroke="#8a898c" stroke-width="0.8"/></svg>
<div class="a" style="left:653.0px;top:284px;width:1.5px;height:3px;background:#4a494c"></div>
<div class="a" style="left:682.7px;top:284px;width:1.5px;height:3px;background:#4a494c"></div>
<div class="a" style="left:712.4px;top:284px;width:1.5px;height:3px;background:#4a494c"></div>
<div class="a" style="left:742.1px;top:284px;width:1.5px;height:3px;background:#4a494c"></div>
<div class="a" style="left:771.8px;top:284px;width:1.5px;height:3px;background:#4a494c"></div>
<div class="a" style="left:801.5px;top:284px;width:1.5px;height:3px;background:#4a494c"></div>
<div class="a" style="left:831.2px;top:284px;width:1.5px;height:3px;background:#4a494c"></div>
<div class="a" style="left:860.9px;top:284px;width:1.5px;height:3px;background:#4a494c"></div>
<div class="a" style="left:890.6px;top:284px;width:1.5px;height:3px;background:#4a494c"></div>
<div class="a" style="left:920.3px;top:284px;width:1.5px;height:3px;background:#4a494c"></div>
<div class="a" style="left:950.0px;top:284px;width:1.5px;height:3px;background:#4a494c"></div>
<div class="a" style="left:799px;top:280px;width:1px;height:5px;background:#555"></div>

<!-- slide -->
<div class="a" style="left:495px;top:293px;width:594px;height:446px;box-shadow:0 0 2px rgba(0,0,0,.25)"></div>
<div class="a" id="mainslide" style="left:495px;top:293px;width:594px;height:446px;overflow:hidden">
<div class="a" style="left:0;top:0;width:594px;height:446px;background:#ffd500"></div><div class="a" style="left:0;top:0;width:594px;height:289.5px;background:#0556b9"></div><div class="a" style="left:71px;top:210px;width:452px;height:158px;background:#fff;box-shadow:1px 1px 2px rgba(90,70,0,.35)"></div><span class="tx" style="left:249.0px;top:14.65px;font-size:11px;color:#10102a;transform:scaleX(1.0943);">Кураторська година</span>
<span class="tx" style="left:172.9px;top:30.35px;font-size:11px;color:#10102a;transform:scaleX(1.0860);">2 курс Готельно-ресторанна справа та кетеринг</span>
<span class="tx" style="left:47.2px;top:98.80px;font-size:30px;color:#ffffff;font-weight:bold;transform:scaleX(1.0106);-webkit-text-stroke:0.7px #fff;">16 лютого – День єднання України</span>
<span class="tx" style="left:76.6px;top:230.34px;font-size:13.6px;color:#e8141c;font-weight:bold;transform:scaleX(0.9744);-webkit-text-stroke:0.25px #e8141c;">День єднання встановлено Указом Президента України №53/2022,</span>
<span class="tx" style="left:76.6px;top:247.54px;font-size:13.6px;color:#e8141c;font-weight:bold;transform:scaleX(0.9675);-webkit-text-stroke:0.25px #e8141c;">підписаним Володимиром Зеленським.</span>
<span class="tx" style="left:76.6px;top:283.24px;font-size:13.6px;color:#e8141c;font-weight:bold;transform:scaleX(0.9745);-webkit-text-stroke:0.25px #e8141c;">Мета запровадження:</span>
<span class="tx" style="left:75.5px;top:300.64px;font-size:13.6px;color:#e8141c;font-weight:bold;transform:scaleX(0.9653);-webkit-text-stroke:0.25px #e8141c;">•зміцнення національної стійкості</span>
<span class="tx" style="left:75.5px;top:318.54px;font-size:13.6px;color:#e8141c;font-weight:bold;transform:scaleX(0.9779);-webkit-text-stroke:0.25px #e8141c;">•протидія інформаційним загрозам</span>
<span class="tx" style="left:75.5px;top:335.44px;font-size:13.6px;color:#e8141c;font-weight:bold;transform:scaleX(0.9566);-webkit-text-stroke:0.25px #e8141c;">•демонстрація єдності українців перед світом</span>
<!-- selection box -->
<div class="a" style="left:122px;top:7px;width:365px;height:38.5px;border:1px dotted rgba(40,40,60,.35)"></div>
<div class="a hdl" style="left:118px;top:3px"></div>
<div class="a hdl" style="left:300.5px;top:3px"></div>
<div class="a hdl" style="left:482.5px;top:3px"></div>
<div class="a hdl" style="left:118px;top:22.5px"></div>
<div class="a hdl" style="left:482.5px;top:22.5px"></div>
<div class="a hdl" style="left:118px;top:41.5px"></div>
<div class="a hdl" style="left:300.5px;top:41.5px"></div>
<div class="a hdl" style="left:482.5px;top:41.5px"></div>
<!-- spelling squiggles on title -->
<div class="a" style="left:89px;top:125.5px;width:106px;height:1px;background:rgba(220,80,120,.5)"></div>
<div class="a" style="left:228px;top:125.5px;width:77px;height:1px;background:rgba(220,80,120,.5)"></div>
<div class="a" style="left:312px;top:125.5px;width:126px;height:1px;background:rgba(220,80,120,.5)"></div>
<div class="a" style="left:448px;top:125.5px;width:117px;height:1px;background:rgba(220,80,120,.5)"></div>
<div class="a" style="left:385px;top:40.5px;width:52px;height:1px;background:rgba(60,60,160,.6)"></div>
<div class="a" style="left:493px;top:281px;width:2px;height:2px;background:#1a3a8a;border-radius:1px"></div>
<div class="a" style="left:527px;top:359px;width:2px;height:2px;background:#6a6a2a;border-radius:1px"></div>
<div class="a" style="left:503px;top:416px;width:2px;height:2px;background:#4a4a2a;border-radius:1px"></div>
</div>

<!-- scrollbar right -->
<div class="a" style="left:1258px;top:268px;width:10px;height:476px;background:#f3f2f5"></div>
<div class="a" style="left:1261px;top:362px;width:4.5px;height:80px;border-radius:2px;background:#7a797c"></div>
<svg style="left:1256px;top:270px" width="12" height="8"><path d="M2 6 l4 -4 l4 4z" fill="#7a797c"/></svg>
<svg style="left:1257px;top:703px" width="10" height="38"><g fill="#6e6d70"><path d="M1 1 h8 l-4 4z"/><path d="M5 12 l4 4 h-8z M5 16 l4 4 h-8z"/><path d="M1 26 h8 l-4 4z M1 30 h8 l-4 4z"/></g></svg>
<!-- pen annotation -->
<svg style="left:0;top:0" width="1280" height="746"><path d="M1087.5 648 Q1092 658 1094 666 Q1095 674 1100 685 Q1110 712 1118 746" fill="none" stroke="#3e7be0" stroke-width="1.6"/></svg>
<!-- bottom-left pen button -->
<div class="a" style="left:18.5px;top:699.5px;width:28.5px;height:28.5px;border-radius:50%;background:#292929"></div>
<svg style="left:18.5px;top:699.5px" width="29" height="29"><g fill="none" stroke="#2fbf7a" stroke-width="1.5" stroke-linejoin="round"><path d="M8.5 18 L17 9.5 L20 12.5 L11.5 21 H8.5 Z"/><path d="M15.5 11 L18.5 14"/><path d="M8.5 21.5 H20"/></g></svg>

<span class="tx" style="left:192.0px;top:55.06px;font-size:16.4px;color:#f4f4f4;font-weight:bold;transform:scaleX(1.0683);">Дарина Косенко</span>
<span class="tx" style="left:362.5px;top:55.06px;font-size:16.4px;color:#f4f4f4;font-weight:bold;transform:scaleX(1.0103);">Kostya&nbsp;&nbsp;Tolobust...</span>
<span class="tx" style="left:537.6px;top:55.06px;font-size:16.4px;color:#f4f4f4;font-weight:bold;transform:scaleX(1.0378);">Путренко&nbsp;&nbsp;Веро...</span>
<span class="tx" style="left:713.0px;top:55.06px;font-size:16.4px;color:#f4f4f4;font-weight:bold;transform:scaleX(1.0392);">Стецишина&nbsp;&nbsp;Ол...</span>
<span class="tx" style="left:1075.0px;top:55.06px;font-size:16.4px;color:#f4f4f4;font-weight:bold;transform:scaleX(1.0210);">Спасиба Анна</span>
<span class="tx" style="left:197.0px;top:95.95px;font-size:11px;color:#e4e4e4;transform:scaleX(1.0260);">Дарина Косенко</span>
<span class="tx" style="left:371.0px;top:95.95px;font-size:11px;color:#e4e4e4;transform:scaleX(1.0216);">Kostya Tolobustuk</span>
<span class="tx" style="left:545.0px;top:95.95px;font-size:11px;color:#e4e4e4;transform:scaleX(1.0494);">Путренко Вероніка</span>
<span class="tx" style="left:720.0px;top:95.95px;font-size:11px;color:#e4e4e4;transform:scaleX(1.0125);">Стецишина Олена</span>
<span class="tx" style="left:894.0px;top:95.95px;font-size:11px;color:#e4e4e4;transform:scaleX(1.0469);">Поліна Пурдіч</span>
<span class="tx" style="left:1068.0px;top:95.95px;font-size:11px;color:#e4e4e4;transform:scaleX(1.0069);">Спасиба Анна</span>
<span class="tx" style="left:167.5px;top:132.29px;font-size:10.6px;color:#b4b2b6;transform:scaleX(0.9370);">Автозбереження</span>
<span class="tx" style="left:426.0px;top:132.29px;font-size:10.6px;color:#b4b2b6;transform:scaleX(1.0458);">День Єдна... • Збережено у цей ПК</span>
<span class="tx" style="left:676.0px;top:131.78px;font-size:11.2px;color:#bdbbbf;transform:scaleX(1.1264);">Пошук</span>
<span class="tx" style="left:137.8px;top:167.56px;font-size:11.7px;color:#3b3a3c;transform:scaleX(0.9918);">Файл</span>
<span class="tx" style="left:185.0px;top:167.56px;font-size:11.7px;color:#3b3a3c;transform:scaleX(1.0157);">Основне</span>
<span class="tx" style="left:250.3px;top:167.56px;font-size:11.7px;color:#3b3a3c;transform:scaleX(0.9662);">Вставлення</span>
<span class="tx" style="left:331.0px;top:167.56px;font-size:11.7px;color:#3b3a3c;transform:scaleX(1.0348);">Малювання</span>
<span class="tx" style="left:415.0px;top:167.56px;font-size:11.7px;color:#3b3a3c;transform:scaleX(1.0504);">Конструктор</span>
<span class="tx" style="left:503.0px;top:167.56px;font-size:11.7px;color:#3b3a3c;transform:scaleX(1.0387);">Переходи</span>
<span class="tx" style="left:576.0px;top:167.56px;font-size:11.7px;color:#3b3a3c;transform:scaleX(1.0422);">Анімація</span>
<span class="tx" style="left:739.0px;top:167.56px;font-size:11.7px;color:#3b3a3c;transform:scaleX(1.0121);">Записати</span>
<span class="tx" style="left:807.0px;top:167.56px;font-size:11.7px;color:#3b3a3c;transform:scaleX(1.0238);">Рецензування</span>
<span class="tx" style="left:903.0px;top:167.56px;font-size:11.7px;color:#3b3a3c;transform:scaleX(1.0381);">Подання</span>
<span class="tx" style="left:969.0px;top:167.56px;font-size:11.7px;color:#3b3a3c;transform:scaleX(1.0465);">Довідка</span>
<span class="tx" style="left:641.0px;top:167.56px;font-size:11.7px;color:#1f1e20;font-weight:bold;transform:scaleX(1.0174);">Показ слайдів</span>
<span class="tx" style="left:1031.0px;top:167.56px;font-size:11.7px;color:#c4432b;transform:scaleX(1.0377);">Формат фігури</span>
<span class="tx" style="left:156.5px;top:224.22px;font-size:11.5px;color:#3a393b;">З</span>
<span class="tx" style="left:140.8px;top:238.82px;font-size:11.5px;color:#3a393b;transform:scaleX(0.9634);">початку</span>
<span class="tx" style="left:185.3px;top:224.22px;font-size:11.5px;color:#3a393b;transform:scaleX(1.0068);">З поточного</span>
<span class="tx" style="left:199.7px;top:238.82px;font-size:11.5px;color:#3a393b;transform:scaleX(0.8908);">слайда</span>
<span class="tx" style="left:261.5px;top:224.22px;font-size:11.5px;color:#3a393b;transform:scaleX(0.9713);">Користувацький</span>
<span class="tx" style="left:263.3px;top:238.82px;font-size:11.5px;color:#3a393b;transform:scaleX(0.9509);">показ слайдів</span>
<span class="tx" style="left:189.0px;top:255.07px;font-size:10.5px;color:#444345;transform:scaleX(0.9375);">Початок показу слайдів</span>
<span class="tx" style="left:366.5px;top:224.22px;font-size:11.5px;color:#c2c0c4;transform:scaleX(0.9194);">Налаштувати</span>
<span class="tx" style="left:361.0px;top:238.82px;font-size:11.5px;color:#c2c0c4;transform:scaleX(0.9494);">показ слайдів...</span>
<span class="tx" style="left:444.7px;top:224.22px;font-size:11.5px;color:#3a393b;transform:scaleX(0.9539);">Приховати</span>
<span class="tx" style="left:457.2px;top:238.82px;font-size:11.5px;color:#3a393b;transform:scaleX(0.9219);">слайд</span>
<span class="tx" style="left:512.0px;top:224.22px;font-size:11.5px;color:#c2c0c4;transform:scaleX(0.9456);">Репетиція</span>
<span class="tx" style="left:526.0px;top:238.82px;font-size:11.5px;color:#c2c0c4;transform:scaleX(0.9334);">часу</span>
<span class="tx" style="left:567.3px;top:224.22px;font-size:11.5px;color:#c2c0c4;transform:scaleX(0.9581);">Записати</span>
<span class="tx" style="left:636.0px;top:198.75px;font-size:11px;color:#c2c0c4;transform:scaleX(1.0130);">Постійно оновлювати слайди</span>
<span class="tx" style="left:636.0px;top:224.35px;font-size:11px;color:#c2c0c4;transform:scaleX(1.0113);">Відтворювати дикторський текст</span>
<span class="tx" style="left:827.0px;top:198.75px;font-size:11px;color:#c2c0c4;transform:scaleX(1.0287);">Використовувати хронометраж</span>
<span class="tx" style="left:827.0px;top:224.35px;font-size:11px;color:#c2c0c4;transform:scaleX(0.9986);">Елементи керування мультимедіа</span>
<span class="tx" style="left:648.0px;top:255.07px;font-size:10.5px;color:#444345;transform:scaleX(0.9052);">Налаштування</span>
<span class="tx" style="left:1033.8px;top:198.32px;font-size:11.5px;color:#c2c0c4;transform:scaleX(0.9796);">Монітор:</span>
<span class="tx" style="left:1084.8px;top:198.32px;font-size:11.5px;color:#3a393b;transform:scaleX(0.9706);">Автоматично</span>
<span class="tx" style="left:1032.7px;top:223.92px;font-size:11.5px;color:#3a393b;transform:scaleX(0.9807);">Режим доповідача</span>
<span class="tx" style="left:1090.3px;top:255.07px;font-size:10.5px;color:#444345;transform:scaleX(0.9694);">Монітори</span>
<span class="tx" style="left:134.5px;top:280.38px;font-size:12.5px;color:#c4432b;">1</span>
<span class="tx" style="left:134.5px;top:399.38px;font-size:12.5px;color:#605e62;">2</span>
<span class="tx" style="left:134.5px;top:516.38px;font-size:12.5px;color:#605e62;">3</span>
<span class="tx" style="left:134.5px;top:632.38px;font-size:12.5px;color:#605e62;">4</span>
</body></html>
